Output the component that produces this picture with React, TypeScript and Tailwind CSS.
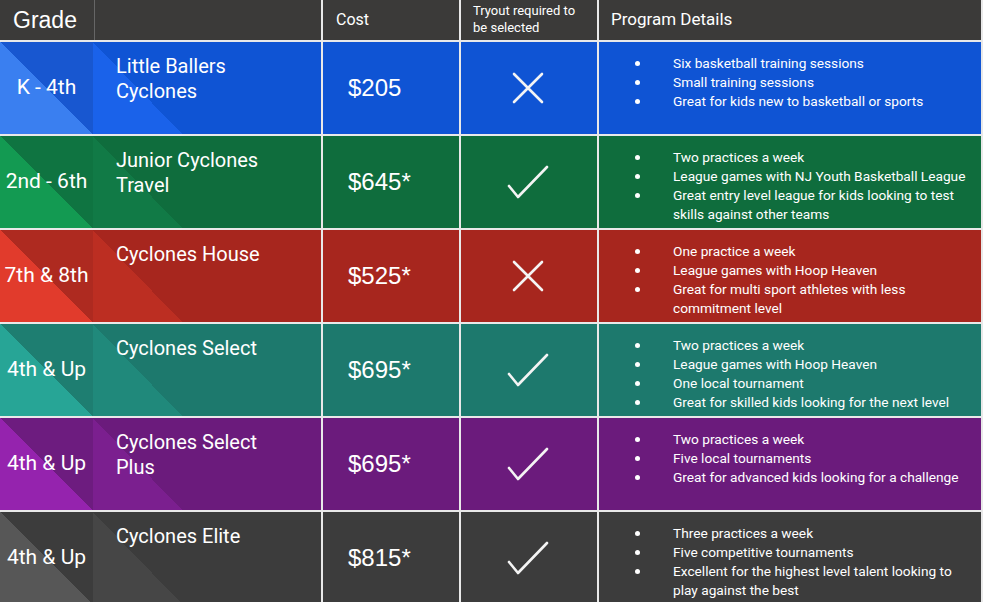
const rows = [
  {
    grade: "K - 4th",
    name: ["Little Ballers", "Cyclones"],
    cost: "$205",
    tryout: false,
    details: [
      "Six basketball training sessions",
      "Small training sessions",
      "Great for kids new to basketball or sports",
    ],
    gradeBg: "bg-[linear-gradient(to_top_right,#3a7ff0_50%,#1857d0_50%)]",
    nameBg:
      "bg-[#0f54d4] bg-[linear-gradient(to_top_right,#1a62ea_50%,transparent_50%)]",
    bg: "bg-[#0f54d4]",
  },
  {
    grade: "2nd - 6th",
    name: ["Junior Cyclones", "Travel"],
    cost: "$645*",
    tryout: true,
    details: [
      "Two practices a week",
      "League games with NJ Youth Basketball League",
      "Great entry level league for kids looking to test skills against other teams",
    ],
    gradeBg: "bg-[linear-gradient(to_top_right,#139a52_50%,#0f7441_50%)]",
    nameBg:
      "bg-[#0f6d3d] bg-[linear-gradient(to_top_right,#117a46_50%,transparent_50%)]",
    bg: "bg-[#0f6d3d]",
  },
  {
    grade: "7th & 8th",
    name: ["Cyclones House"],
    cost: "$525*",
    tryout: false,
    details: [
      "One practice a week",
      "League games with Hoop Heaven",
      "Great for multi sport athletes with less commitment level",
    ],
    gradeBg: "bg-[linear-gradient(to_top_right,#e13b2c_50%,#ae2a20_50%)]",
    nameBg:
      "bg-[#a7261e] bg-[linear-gradient(to_top_right,#bc2e22_50%,transparent_50%)]",
    bg: "bg-[#a7261e]",
  },
  {
    grade: "4th & Up",
    name: ["Cyclones Select"],
    cost: "$695*",
    tryout: true,
    details: [
      "Two practices a week",
      "League games with Hoop Heaven",
      "One local tournament",
      "Great for skilled kids looking for the next level",
    ],
    gradeBg: "bg-[linear-gradient(to_top_right,#27a596_50%,#1e7e71_50%)]",
    nameBg:
      "bg-[#1d796d] bg-[linear-gradient(to_top_right,#20897b_50%,transparent_50%)]",
    bg: "bg-[#1d796d]",
  },
  {
    grade: "4th & Up",
    name: ["Cyclones Select", "Plus"],
    cost: "$695*",
    tryout: true,
    details: [
      "Two practices a week",
      "Five local tournaments",
      "Great for advanced kids looking for a challenge",
    ],
    gradeBg: "bg-[linear-gradient(to_top_right,#9523ae_50%,#6d1c7f_50%)]",
    nameBg:
      "bg-[#6b1b7c] bg-[linear-gradient(to_top_right,#7b1f8f_50%,transparent_50%)]",
    bg: "bg-[#6b1b7c]",
  },
  {
    grade: "4th & Up",
    name: ["Cyclones Elite"],
    cost: "$815*",
    tryout: true,
    details: [
      "Three practices a week",
      "Five competitive tournaments",
      "Excellent for the highest level talent looking to play against the best",
    ],
    gradeBg: "bg-[linear-gradient(to_top_right,#575757_50%,#3c3c3c_50%)]",
    nameBg:
      "bg-[#3c3c3c] bg-[linear-gradient(to_top_right,#464646_50%,transparent_50%)]",
    bg: "bg-[#3c3c3c]",
  },
];

const Check = () => (
  <svg width="42" height="34" viewBox="0 0 42 34" fill="none">
    <polyline
      points="2,21 11,32 40,2"
      stroke="#f4f4f4"
      strokeWidth="2.6"
      strokeLinecap="round"
      strokeLinejoin="round"
    />
  </svg>
);

const Cross = () => (
  <svg width="32" height="32" viewBox="0 0 32 32" fill="none">
    <path
      d="M2 2 L30 30 M30 2 L2 30"
      stroke="#f4f4f4"
      strokeWidth="2.6"
      strokeLinecap="round"
    />
  </svg>
);

export default function App() {
  return (
    <div className="w-[983px] h-[602px] overflow-hidden bg-[#e9e9e9] pr-[2px] flex flex-col gap-[2px] text-white font-['Roboto',sans-serif]">
      {/* header */}
      <div className="h-[40px] shrink-0 flex gap-[2px]">
        <div className="w-[321px] flex bg-[#3b3a39]">
          <div className="w-[95px] border-r border-[#666] pl-[13px] flex items-center text-[23px] font-['Liberation_Sans',sans-serif]">
            Grade
          </div>
        </div>
        <div className="w-[136px] bg-[#3b3a39] pl-[13px] flex items-center text-[16px]">
          Cost
        </div>
        <div className="w-[136px] bg-[#3b3a39] pl-[12px] pr-[14px] pt-[2px] text-[13px] leading-[17px]">
          Tryout required to be selected
        </div>
        <div className="flex-1 bg-[#3b3a39] pl-[12px] flex items-center text-[17px]">
          Program Details
        </div>
      </div>

      {rows.map((r, i) => (
        <div key={i} className="h-[92px] shrink-0 flex gap-[2px]">
          <div className="w-[321px] flex">
            <div
              className={`w-[93px] shrink-0 flex items-center justify-center text-[21px] whitespace-nowrap ${r.gradeBg}`}
            >
              {r.grade}
            </div>
            <div
              className={`flex-1 pl-[23px] pt-[12px] text-[20px] leading-[25px] bg-[length:89px_100%] bg-no-repeat ${r.nameBg}`}
            >
              {r.name.map((n) => (
                <div key={n}>{n}</div>
              ))}
            </div>
          </div>
          <div
            className={`w-[136px] pl-[25px] flex items-center text-[24px] font-['Liberation_Sans',sans-serif] ${r.bg}`}
          >
            {r.cost}
          </div>
          <div
            className={`w-[136px] flex items-center justify-center pr-[2px] ${r.bg}`}
          >
            {r.tryout ? <Check /> : <Cross />}
          </div>
          <div className={`flex-1 pt-[12px] pr-[8px] ${r.bg}`}>
            <ul className="text-[13.7px] leading-[19px]">
              {r.details.map((d) => (
                <li key={d} className="flex">
                  <span className="w-[74px] shrink-0 pl-[36px] flex items-start pt-[7px]">
                    <span className="w-[5px] h-[5px] rounded-full bg-white" />
                  </span>
                  <span>{d}</span>
                </li>
              ))}
            </ul>
          </div>
        </div>
      ))}
    </div>
  );
}
